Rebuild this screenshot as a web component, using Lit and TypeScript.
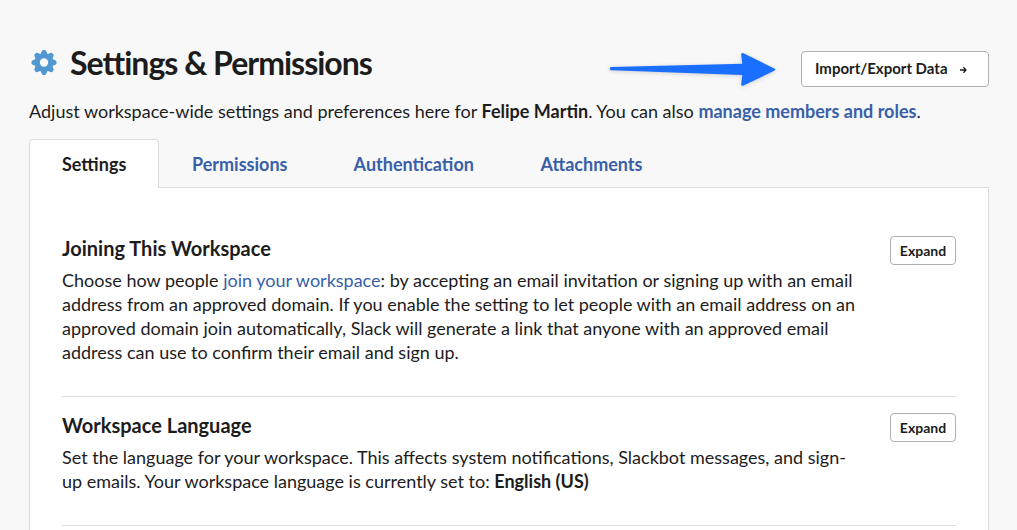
import { LitElement, html, css } from "lit";
import { customElement, property } from "lit/decorators.js";

@customElement("setting-section")
class SettingSection extends LitElement {
  @property() heading = "";

  static styles = css`
    :host {
      display: flex;
      justify-content: space-between;
      align-items: flex-start;
      box-sizing: border-box;
      border-bottom: 1px solid #ddd;
      padding: 16px 0 32px;
    }
    h2 {
      margin: 0 0 8px;
      font-size: 20px;
      line-height: 24px;
      font-weight: 700;
    }
    .copy {
      line-height: 24px;
      white-space: nowrap;
    }
    button {
      box-sizing: border-box;
      width: 66px;
      height: 29px;
      padding: 0;
      border: 1px solid #b0b0b2;
      border-radius: 4px;
      background: #fff;
      color: #1d1c1d;
      font: 700 14px/27px Lato, sans-serif;
    }
  `;

  render() {
    return html`
      <div>
        <h2>${this.heading}</h2>
        <div class="copy"><slot></slot></div>
      </div>
      <button>Expand</button>
    `;
  }
}

@customElement("app-root")
class AppRoot extends LitElement {
  static styles = css`
    :host {
      display: block;
      box-sizing: border-box;
      height: 530px;
      overflow: hidden;
      padding: 45px 28px 0 29px;
      background: #f8f8f8;
      color: #1d1c1d;
      font: 400 18px/24px Lato, sans-serif;
    }
    header {
      display: flex;
      align-items: flex-start;
      height: 54px;
    }
    .gear {
      flex: none;
      width: 26px;
      height: 26px;
      margin: 4px 13px 0 2px;
    }
    h1 {
      flex: 1;
      margin: 0;
      font-size: 32px;
      line-height: 36px;
      font-weight: 700;
      letter-spacing: -1px;
      white-space: nowrap;
    }
    .arrow {
      flex: none;
      width: 180px;
      height: 46px;
      margin: 2px 18px 0 0;
      filter: drop-shadow(0 1px 2px rgba(0, 0, 0, 0.16));
    }
    .export {
      flex: none;
      display: flex;
      align-items: center;
      box-sizing: border-box;
      width: 188px;
      height: 36px;
      margin-top: 6px;
      padding: 0 0 1px 13px;
      border: 1px solid #b0b0b2;
      border-radius: 4px;
      background: #fff;
      color: #1d1c1d;
      font: 700 15px/33px Lato, sans-serif;
      white-space: nowrap;
    }
    .export svg {
      width: 8px;
      height: 8px;
      margin: 2px 0 0 11.5px;
    }
    .intro {
      margin: 0;
      height: 40px;
      line-height: 24px;
      white-space: nowrap;
    }
    a {
      color: #3860a8;
      text-decoration: none;
    }
    nav {
      display: flex;
      height: 49px;
      margin-bottom: -1px;
      font-weight: 700;
      line-height: 50px;
    }
    nav a {
      box-sizing: border-box;
      padding-left: 33px;
      white-space: nowrap;
    }
    nav .active {
      z-index: 1;
      width: 130px;
      padding-left: 32px;
      border: 1px solid #ddd;
      border-bottom: 0;
      border-radius: 4px 4px 0 0;
      background: #fff;
      color: #1d1c1d;
      line-height: 48px;
    }
    .t2 {
      width: 161.6px;
    }
    .t3 {
      width: 187px;
    }
    main {
      box-sizing: border-box;
      height: 400px;
      padding: 32px 32px 0;
      border: 1px solid #ddd;
      background: #fff;
    }
  `;

  render() {
    return html`
      <header>
        <svg class="gear" viewBox="-13 -13.5 26 26" fill="#5197d1">
          <circle r="9.2"></circle>
          ${[0, 45, 90, 135].map(
            (a) => html`<svg x="-13" y="-13" width="26" height="26" viewBox="-13 -13 26 26">
              <path
                transform="rotate(${a})"
                d="M-3.6-8.2L-2.2-11.2Q-1.7-12.5-.7-12.5H.7Q1.7-12.5 2.2-11.2L3.6-8.2V8.2L2.2 11.2Q1.7 12.5 .7 12.5H-.7Q-1.7 12.5-2.2 11.2L-3.6 8.2z"
              ></path>
            </svg>`
          )}
          <circle r="4.2" fill="#f8f8f8"></circle>
        </svg>
        <h1>Settings &amp; Permissions</h1>
        <svg class="arrow" viewBox="603 47 180 46">
          <path
            d="M610.8 67L742.3 63.8L741.2 55Q741 52.2 743.5 53.3L774.3 68.4Q776.5 69.6 774.3 70.8L743.5 85.6Q741 86.6 741.2 83.9L742.3 75L610.8 70.3Q608.6 68.6 610.8 67z"
            fill="#1b6fff"
          ></path>
        </svg>
        <button class="export">
          Import/Export Data
          <svg viewBox="0 0 8 8" fill="none" stroke="#1d1c1d" stroke-width="1.3">
            <path d="M1 4H7M4.4 1.3L7 4L4.4 6.7"></path>
          </svg>
        </button>
      </header>
      <p class="intro">
        Adjust workspace-wide settings and preferences here for <b>Felipe Martin</b>. You can also
        <a href="#"><b>manage members and roles</b></a>.
      </p>
      <nav>
        <a class="active" href="#">Settings</a>
        <a class="t2" href="#">Permissions</a>
        <a class="t3" href="#">Authentication</a>
        <a href="#">Attachments</a>
      </nav>
      <main>
        <setting-section heading="Joining This Workspace">
          Choose how people <a href="#">join your workspace</a>: by accepting an email invitation or signing up with an email<br />
          address from an approved domain. If you enable the setting to let people with an email address on an<br />
          approved domain join automatically, Slack will generate a link that anyone with an approved email<br />
          address can use to confirm their email and sign up.
        </setting-section>
        <setting-section heading="Workspace Language">
          Set the language for your workspace. This affects system notifications, Slackbot messages, and sign-<br />up
          emails. Your workspace language is currently set to: <b>English (US)</b>
        </setting-section>
      </main>
    `;
  }
}
